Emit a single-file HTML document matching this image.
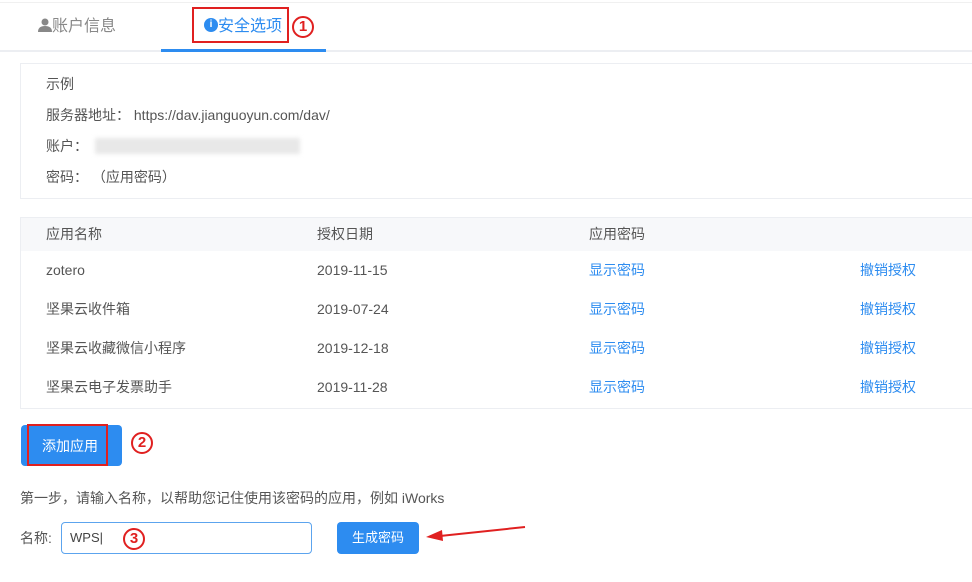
<!DOCTYPE html>
<html><head><meta charset="utf-8"><style>
*{margin:0;padding:0;box-sizing:border-box}
body{width:972px;height:582px;background:#fff;font-family:"Liberation Sans","Noto Sans CJK SC",sans-serif;color:#555;font-size:14px;position:relative;overflow:hidden}
.a{position:absolute;white-space:nowrap;line-height:20px}
.blue{color:#2d8cf0}
.circ{position:absolute;width:22px;height:22px;border:2.5px solid #e02020;border-radius:50%;color:#e02020;font-weight:bold;font-size:15px;text-align:center;line-height:17px}
</style></head><body>
<div class="a" style="left:0;top:2px;width:972px;height:1px;background:#f0f0f0"></div>
<div class="a" style="left:0;top:50px;width:972px;height:2px;background:#eceef2"></div>
<div class="a" style="left:161px;top:49px;width:165px;height:3px;background:#2d8cf0"></div>
<svg class="a" style="left:38px;top:18px" width="14" height="14" viewBox="0 0 14 14"><circle cx="7" cy="4" r="3.5" fill="#888"/><path d="M0 14 Q0 8 7 8 Q14 8 14 14Z" fill="#888"/></svg>
<div class="a" style="left:52px;top:16px;font-size:16px;color:#888;line-height:22px">账户信息</div>
<div class="a" style="left:204px;top:18px;width:14px;height:14px;border-radius:50%;background:#2d8cf0;color:#fff;font-size:10px;font-weight:bold;text-align:center;line-height:14px">i</div>
<div class="a blue" style="left:218px;top:16px;font-size:16px;line-height:22px">安全选项</div>
<div class="a" style="left:192px;top:7px;width:97px;height:36px;border:2px solid #e02020"></div>
<div class="circ" style="left:292px;top:16px">1</div>

<div class="a" style="left:20px;top:63px;width:960px;height:136px;border:1px solid #eceef2"></div>
<div class="a" style="left:46px;top:74px">示例</div>
<div class="a" style="left:46px;top:105px">服务器地址： https://dav.jianguoyun.com/dav/</div>
<div class="a" style="left:46px;top:136px">账户：</div>
<div class="a" style="left:95px;top:138px;width:205px;height:16px;background:#e8e8e8;filter:blur(2px)"></div>
<div class="a" style="left:46px;top:167px">密码： （应用密码）</div>

<div class="a" style="left:20px;top:217px;width:960px;height:192px;border:1px solid #eceef2"></div>
<div class="a" style="left:21px;top:218px;width:960px;height:33px;background:#f7f8fa"></div>
<div class="a" style="left:46px;top:224px">应用名称</div><div class="a" style="left:317px;top:224px">授权日期</div><div class="a" style="left:589px;top:224px">应用密码</div>
<div class="a" style="left:46px;top:260px">zotero</div><div class="a" style="left:317px;top:260px">2019-11-15</div><div class="a blue" style="left:589px;top:260px">显示密码</div><div class="a blue" style="left:860px;top:260px">撤销授权</div>
<div class="a" style="left:46px;top:299px">坚果云收件箱</div><div class="a" style="left:317px;top:299px">2019-07-24</div><div class="a blue" style="left:589px;top:299px">显示密码</div><div class="a blue" style="left:860px;top:299px">撤销授权</div>
<div class="a" style="left:46px;top:338px">坚果云收藏微信小程序</div><div class="a" style="left:317px;top:338px">2019-12-18</div><div class="a blue" style="left:589px;top:338px">显示密码</div><div class="a blue" style="left:860px;top:338px">撤销授权</div>
<div class="a" style="left:46px;top:377px">坚果云电子发票助手</div><div class="a" style="left:317px;top:377px">2019-11-28</div><div class="a blue" style="left:589px;top:377px">显示密码</div><div class="a blue" style="left:860px;top:377px">撤销授权</div>

<div class="a" style="left:21px;top:425px;width:101px;height:41px;background:#2d8cf0;border-radius:4px"></div>
<div class="a" style="left:27px;top:424px;width:81px;height:42px;border:2px solid #e02020"></div>
<div class="a" style="left:42px;top:436px;color:#fff;font-size:14px">添加应用</div>
<div class="circ" style="left:131px;top:432px">2</div>

<div class="a" style="left:20px;top:488px">第一步，请输入名称，以帮助您记住使用该密码的应用，例如 iWorks</div>
<div class="a" style="left:20px;top:528px">名称:</div>
<div class="a" style="left:61px;top:522px;width:251px;height:32px;border:1px solid #5ca4ee;border-radius:4px"></div>
<div class="a" style="left:70px;top:528px;font-size:13px;color:#444">WPS|</div>
<div class="circ" style="left:123px;top:528px">3</div>
<div class="a" style="left:337px;top:522px;width:82px;height:32px;background:#2d8cf0;border-radius:4px;color:#fff;font-size:13px;text-align:center;line-height:32px">生成密码</div>
<svg class="a" style="left:420px;top:520px" width="110" height="24"><line x1="105" y1="7" x2="20" y2="16" stroke="#e02020" stroke-width="2"/><path d="M6 17 L22 10 L23 21Z" fill="#e02020"/></svg>
</body></html>
